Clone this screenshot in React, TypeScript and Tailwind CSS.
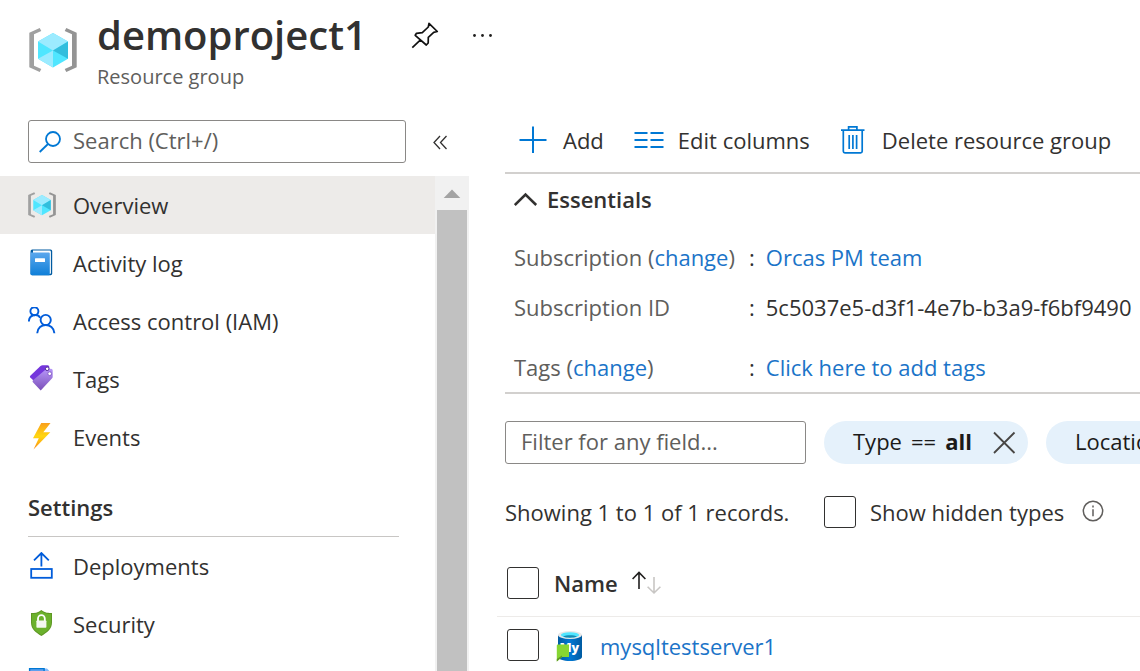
import React from "react";
import type { ReactNode } from "react";

function ResourceGroupIcon({ className }: { className: string }) {
  return (
    <svg viewBox="0 0 48 48" className={className} aria-hidden="true">
      <path fill="#a0a0a0" d="M10.7 2 .3 6.7v34.6L10.7 46l1.6-3L5 39.7V8.3L12.3 5z" />
      <path fill="#949494" d="M37.3 2l10.4 4.7v34.6L37.3 46l-1.6-3 7.3-3.3V8.3L35.7 5z" />
      <path fill="#50e6ff" d="M24 7l15 8.5v17.3L24 41.5 9 32.8V15.5z" />
      <path fill="#9cebff" d="M24 7l15 8.5-15 9-15-9zM9 32.8l15-8.3v17z" />
      <path fill="#32bedd" d="M39 15.5v17.3l-15-8.3z" />
    </svg>
  );
}

function BookIcon() {
  return (
    <svg viewBox="0 0 28 28" className="size-7" aria-hidden="true">
      <defs>
        <linearGradient id="book" x1="0" y1="0" x2="0" y2="1">
          <stop offset="0" stopColor="#5ea9ee" />
          <stop offset="1" stopColor="#0f7fd8" />
        </linearGradient>
      </defs>
      <rect x="2.6" y="0.4" width="21.6" height="25.8" rx="1.6" fill="#005ba1" />
      <path d="M5 1.4h16.6q1.3 0 1.3 1.3v21q0 1.2-1.2 1.2H5z" fill="#fff" />
      <path d="M2.4 2.6q0 1 1 1h17.4q1 0 1 1v20.600q0 1-1 1H3.800q-1.400 0-1.400-1.400z" fill="url(#book)" />
      <rect x="7" y="9.300" width="10" height="3.700" rx=".5" fill="#fff" />
    </svg>
  );
}

function PeopleIcon() {
  return (
    <svg viewBox="0 0 28 28" className="size-7" fill="none" stroke="#015cda" strokeWidth="1.9" aria-hidden="true">
      <circle cx="6.400" cy="4.200" r="4" />
      <path d="M.9 14.500c0-7 8.500-8.500 11.300-3.800" />
      <circle cx="17.700" cy="13" r="5.100" />
      <path d="M9.200 26.200c.6-11 16.400-11 17.200 0" />
    </svg>
  );
}

function TagsIcon() {
  return (
    <svg viewBox="0 0 28 28" className="size-7" aria-hidden="true">
      <defs>
        <linearGradient id="tag" x1="0" y1="0" x2="0" y2="1">
          <stop offset="0" stopColor="#b796f9" />
          <stop offset="1" stopColor="#7a4fb8" />
        </linearGradient>
      </defs>
      <path d="M2.300 10.800 12.500 1q.9-.8 2-.8h5.200q1.500 0 1.600 1.500v8L7 17 2.300 12.600q-.9-.9 0-1.800z" fill="#7436dc" />
      <path d="M5 15.300 16.500 5.400q.9-.8 2-.8L23 3.800q1.700 0 1.700 1.700v6.200q0 1.100-.8 1.900L12.700 25.500 4.900 17.300q-.9-1 .1-2z" fill="url(#tag)" />
      <circle cx="19.200" cy="3.800" r="1.800" fill="#fff" stroke="#552f99" />
      <circle cx="21.700" cy="8.700" r="1.900" fill="#fff" stroke="#8660c9" />
    </svg>
  );
}

function BoltIcon() {
  return (
    <svg viewBox="0 0 28 28" className="size-7" aria-hidden="true">
      <defs>
        <linearGradient id="bolt" x1="0" y1="0" x2="0" y2="1">
          <stop offset="0" stopColor="#fa9f1c" />
          <stop offset=".5" stopColor="#ffd70f" />
          <stop offset="1" stopColor="#fb8b16" />
        </linearGradient>
      </defs>
      <path d="M13.200 0h9.300l-7.200 9.300h7L5.500 26.500l5.300-11.300H5z" fill="url(#bolt)" />
    </svg>
  );
}

function DeployIcon() {
  return (
    <svg viewBox="0 0 28 28" className="size-7" fill="none" stroke="#015cda" strokeWidth="1.800" aria-hidden="true">
      <path d="M13.400 14.500V1M6 8.400l7.400-7.400 7.400 7.400" />
      <rect x="3.200" y="17" width="20.600" height="8.800" />
    </svg>
  );
}

function ShieldIcon() {
  return (
    <svg viewBox="0 0 28 28" className="size-7" aria-hidden="true">
      <path d="M13.400 0c3.600 3 7.300 3 10.600 3v9.500c0 6.700-5 9.900-10.600 13.500C7.800 22.400 3 19.200 3 12.500V3c3.300 0 6.800 0 10.400-3z" fill="#5e9624" />
      <path d="M13.400 1.200c3.300 2.600 6.600 2.800 9.700 2.800v8.500c0 6-4.300 9-9.700 12.300C8 21.500 4 18.500 4 12.500V4c3 0 6.100-.2 9.400-2.800z" fill="#6bb12c" />
      <path d="M10 11V8.600a3.400 3.400 0 0 1 6.800 0V11" fill="none" stroke="#fff" strokeWidth="1.800" />
      <rect x="8.400" y="10.400" width="10" height="7.400" rx=".8" fill="#f4f8f0" />
    </svg>
  );
}

function PolicyIcon() {
  return (
    <svg viewBox="0 0 28 28" className="size-7" aria-hidden="true">
      <path d="M14 .6h5l4 4V26H14z" fill="#83b9f9" />
      <path d="M1.600.6h14.500V26H1.600z" fill="#5ea0ef" stroke="#0078d4" strokeWidth="1.400" />
    </svg>
  );
}

function MySqlIcon() {
  return (
    <svg viewBox="0 0 28 32" className="h-8 w-7" aria-hidden="true">
      <defs>
        <linearGradient id="drum" x1="0" x2="1">
          <stop offset="0" stopColor="#005ba1" />
          <stop offset=".5" stopColor="#0078d4" />
          <stop offset="1" stopColor="#005ba1" />
        </linearGradient>
      </defs>
      <path d="M2 5v22c0 2.300 5.300 4 12 4s12-1.700 12-4V5z" fill="url(#drum)" />
      <ellipse cx="14" cy="5" rx="12" ry="4" fill="#e8e8e8" />
      <ellipse cx="14" cy="5" rx="9.200" ry="2.800" fill="#50e6ff" />
      <path d="M7 6.600c3-1.700 11-1.700 14 0-3 1.600-11 1.600-14 0z" fill="#198ab3" />
      <text x="3.500" y="22" fontFamily="Open Sans, sans-serif" fontSize="12.500" fontWeight="800" fill="#fff">My</text>
      <path d="M.8 15.500q0-1 1-1H13V27H6l-5.200 4.600z" fill="#86d633" />
      <path d="M.8 31.600V29L6 25.500V27z" fill="#5e9624" />
    </svg>
  );
}

function Checkbox({ label }: { label: string }) {
  return (
    <input
      type="checkbox"
      aria-label={label}
      className="block size-8 shrink-0 appearance-none rounded-[3px] border border-[#323130] bg-white checked:bg-[#0078d4]"
    />
  );
}

function NavItem({ icon, label, active }: { icon: ReactNode; label: string; active?: boolean }) {
  return (
    <li>
      <a
        href="#"
        aria-current={active ? "page" : undefined}
        className={`flex h-[58px] items-center gap-[17px] pl-7 ${active ? "bg-[#edebe9]" : ""}`}
      >
        {icon}
        <span>{label}</span>
      </a>
    </li>
  );
}

function Sidebar() {
  return (
    <aside className="flex w-[469px] shrink-0 flex-col">
      <div className="flex items-center pb-[13px] pl-7">
        <label className="flex h-[43px] w-[378px] items-center gap-[10px] rounded-[3px] border border-[#8a8886] px-[10px]">
          <svg viewBox="0 0 24 24" className="size-6 shrink-0" fill="none" stroke="#0078d4" strokeWidth="1.800" aria-hidden="true">
            <circle cx="14" cy="9" r="7" />
            <path d="M9 14l-8.300 8" />
          </svg>
          <input type="text" aria-label="Search" placeholder="Search (Ctrl+/)" className="min-w-0 flex-1 pb-[3px] outline-none placeholder:text-[#605e5c]" />
        </label>
        <button type="button" aria-label="Collapse menu" className="ml-[26px]">
          <svg viewBox="0 0 16 16" className="size-4" fill="none" stroke="#323130" strokeWidth="1.300" aria-hidden="true">
            <path d="M8 2 2 8.500 8 15M14.500 2l-6 6.500 6 6.500" />
          </svg>
        </button>
      </div>
      <div className="flex min-h-0 flex-1">
        <nav className="min-w-0 flex-1 overflow-hidden">
          <ul>
            <NavItem active icon={<ResourceGroupIcon className="size-7" />} label="Overview" />
            <NavItem icon={<BookIcon />} label="Activity log" />
            <NavItem icon={<PeopleIcon />} label="Access control (IAM)" />
            <NavItem icon={<TagsIcon />} label="Tags" />
            <NavItem icon={<BoltIcon />} label="Events" />
          </ul>
          <h2 className="mr-9 ml-7 border-b border-[#c8c6c4] pt-[26px] pb-[14px] leading-[30px] font-semibold">Settings</h2>
          <ul>
            <NavItem icon={<DeployIcon />} label="Deployments" />
            <NavItem icon={<ShieldIcon />} label="Security" />
            <NavItem icon={<PolicyIcon />} label="Policies" />
          </ul>
        </nav>
        <div className="flex w-[34px] flex-col items-center bg-[#f1f1f1]">
          <svg viewBox="0 0 34 34" className="size-[34px] shrink-0" aria-hidden="true">
            <path d="M17 13.500 25.300 22H8.700z" fill="#a3a3a3" />
          </svg>
          <div className="w-[30px] flex-1 bg-[#c1c1c1]" />
        </div>
      </div>
    </aside>
  );
}

function Toolbar() {
  return (
    <div className="ml-2 flex h-[54px] items-start border-b-2 border-[#d2d0ce] pl-[14px] whitespace-nowrap">
      <button type="button" className="flex h-10 items-center gap-4">
        <svg viewBox="0 0 28 28" className="size-7" fill="none" stroke="#0078d4" strokeWidth="2" aria-hidden="true">
          <path d="M14 .5v26.500M.5 14h27" />
        </svg>
        <span>Add</span>
      </button>
      <button type="button" className="ml-[30px] flex h-10 items-center gap-[14px]">
        <svg viewBox="0 0 30 28" className="h-7 w-[30px]" fill="none" stroke="#0078d4" strokeWidth="2" aria-hidden="true">
          <path d="M.5 7h13M16.500 7h13M.5 14h13M16.500 14h13M.5 21h13M16.500 21h13" />
        </svg>
        <span>Edit columns</span>
      </button>
      <button type="button" className="ml-[31px] flex h-10 items-center gap-[17px]">
        <svg viewBox="0 0 24 28" className="h-7 w-6" fill="none" stroke="#0078d4" strokeWidth="1.700" aria-hidden="true">
          <path d="M0 4.200h23.500M7.600 4.200V.9h8.300v3.300M2.300 4.200v21q0 1.600 1.600 1.600h15.700q1.600 0 1.600-1.600v-21M8.200 9v14M11.900 9v14M15.600 9v14" />
        </svg>
        <span>Delete resource group</span>
      </button>
    </div>
  );
}

function Link({ children }: { children: ReactNode }) {
  return <a href="#" className="text-[#1b74c8]">{children}</a>;
}

function Fact({ term, value, className }: { term: ReactNode; value: ReactNode; className: string }) {
  return (
    <div className={`flex items-center whitespace-nowrap ${className}`}>
      <dt className="w-[235px] shrink-0 text-[#605e5c]">{term}</dt>
      <dd className="flex gap-[11px]">
        <span>:</span>
        <span>{value}</span>
      </dd>
    </div>
  );
}

function Essentials() {
  return (
    <section className="ml-2 border-b-2 border-[#d2d0ce] pb-[10px] pl-[9px]">
      <h2>
        <button type="button" aria-expanded="true" className="flex h-[54px] items-center gap-[9px] pb-1 font-semibold">
          <svg viewBox="0 0 24 24" className="size-6" fill="none" stroke="#323130" strokeWidth="2.500" aria-hidden="true">
            <path d="M.8 18 11.500 7.500 22.200 18" />
          </svg>
          <span>Essentials</span>
        </button>
      </h2>
      <dl className="pt-1">
        <Fact className="h-[50px]" term={<>Subscription (<Link>change</Link>)</>} value={<Link>Orcas PM team</Link>} />
        <Fact className="h-[50px]" term="Subscription ID" value="5c5037e5-d3f1-4e7b-b3a9-f6bf9490" />
        <Fact className="h-[50px] pt-5" term={<>Tags (<Link>change</Link>)</>} value={<Link>Click here to add tags</Link>} />
      </dl>
    </section>
  );
}

function Filters() {
  return (
    <div className="ml-2 flex gap-[18px] pt-[27px] whitespace-nowrap">
      <input
        type="text"
        aria-label="Filter for any field"
        placeholder="Filter for any field..."
        className="h-[43px] w-[301px] shrink-0 rounded-[3px] border border-[#8a8886] px-[15px] pb-[3px] outline-none placeholder:text-[#605e5c]"
      />
      <div className="flex h-[43px] w-[204px] shrink-0 items-center justify-between rounded-full bg-[#e5f1fb] pr-3 pl-[29px] text-[#1b1a19]">
        <button type="button" className="flex gap-[9px] pb-[3px]">
          <span>Type</span>
          <span>==</span>
          <b>all</b>
        </button>
        <button type="button" aria-label="Remove filter">
          <svg viewBox="0 0 24 24" className="size-6" fill="none" stroke="#484644" strokeWidth="1.800" aria-hidden="true">
            <path d="M2 1.500l20.500 20.500M22.500 1.500 2 22" />
          </svg>
        </button>
      </div>
      <button type="button" className="flex h-[43px] shrink-0 items-center gap-[9px] rounded-full bg-[#e5f1fb] px-[29px] pb-[3px] text-[#1b1a19]">
        <span>Location</span>
        <span>==</span>
        <b>all</b>
      </button>
    </div>
  );
}

function Records() {
  return (
    <>
      <div className="ml-2 flex h-24 items-center whitespace-nowrap">
        <p className="w-[319px] shrink-0">Showing 1 to 1 of 1 records.</p>
        <label className="flex items-center gap-[14px]">
          <Checkbox label="Show hidden types" />
          <span>Show hidden types</span>
        </label>
        <svg viewBox="0 0 24 24" className="ml-[17px] size-6 shrink-0" fill="none" stroke="#605e5c" strokeWidth="1.500" aria-hidden="true">
          <circle cx="12" cy="11" r="9.700" />
          <path d="M12 9.300v7M12 5.500v2" />
        </svg>
      </div>
      <table className="w-full whitespace-nowrap">
        <thead>
          <tr className="h-14 border-b border-[#edebe9]">
            <th scope="col" className="w-[57px] pb-[10px] pl-[10px]"><Checkbox label="Select all" /></th>
            <th scope="col" className="pb-[10px] text-left font-semibold">
              <button type="button" className="flex items-center gap-[14px]">
                <span>Name</span>
                <svg viewBox="0 0 30 24" className="h-6 w-[30px]" fill="none" strokeWidth="1.600" aria-hidden="true">
                  <path d="M7 18V1.500M.6 8 7 1.500 13.400 8" stroke="#201f1e" />
                  <path d="M22 6v16M15.600 15.800 22 22l6.400-6.200" stroke="#c8c6c4" />
                </svg>
              </button>
            </th>
          </tr>
        </thead>
        <tbody>
          <tr className="h-[58px]">
            <td className="pl-[10px]"><Checkbox label="Select mysqltestserver1" /></td>
            <td>
              <span className="flex items-center gap-4 pt-[2px] pl-[2px]">
                <MySqlIcon />
                <Link>mysqltestserver1</Link>
              </span>
            </td>
          </tr>
        </tbody>
      </table>
    </>
  );
}

export default function App() {
  return (
    <div className="flex h-screen flex-col overflow-hidden bg-white font-['Open_Sans','Noto_Sans',sans-serif] text-[22px] leading-[30px] text-[#323130]">
      <header className="flex h-[120px] shrink-0 items-start pt-2 pl-[29px]">
        <ResourceGroupIcon className="mt-[18px] size-12" />
        <div className="ml-5">
          <h1 className="text-[40px] leading-[54px] font-semibold">demoproject1</h1>
          <p className="text-[20px] leading-[30px] text-[#605e5c]">Resource group</p>
        </div>
        <button type="button" aria-label="Pin to dashboard" className="mt-[14px] ml-11">
          <svg viewBox="0 0 28 28" className="size-7" fill="none" stroke="#111" strokeWidth="1.700" strokeLinejoin="round" aria-hidden="true">
            <path d="M18 1.300 17.300 5l-6 5.700-5.800.6-1.300 2L15.300 23l1.900-2 .1-5.700 5.400-5 3.600-.8zM10 17.400l-8.700 8.300" />
          </svg>
        </button>
        <button type="button" aria-label="More options" className="mt-[14px] ml-[33px]">
          <svg viewBox="0 0 22 28" className="h-7 w-[22px]" fill="#201f1e" aria-hidden="true">
            <circle cx="2.500" cy="13.500" r="1.400" />
            <circle cx="10.500" cy="13.500" r="1.400" />
            <circle cx="18.500" cy="13.500" r="1.400" />
          </svg>
        </button>
      </header>
      <div className="flex min-h-0 flex-1">
        <Sidebar />
        <main className="min-w-0 flex-1 overflow-hidden pl-7">
          <Toolbar />
          <Essentials />
          <Filters />
          <Records />
        </main>
      </div>
    </div>
  );
}
